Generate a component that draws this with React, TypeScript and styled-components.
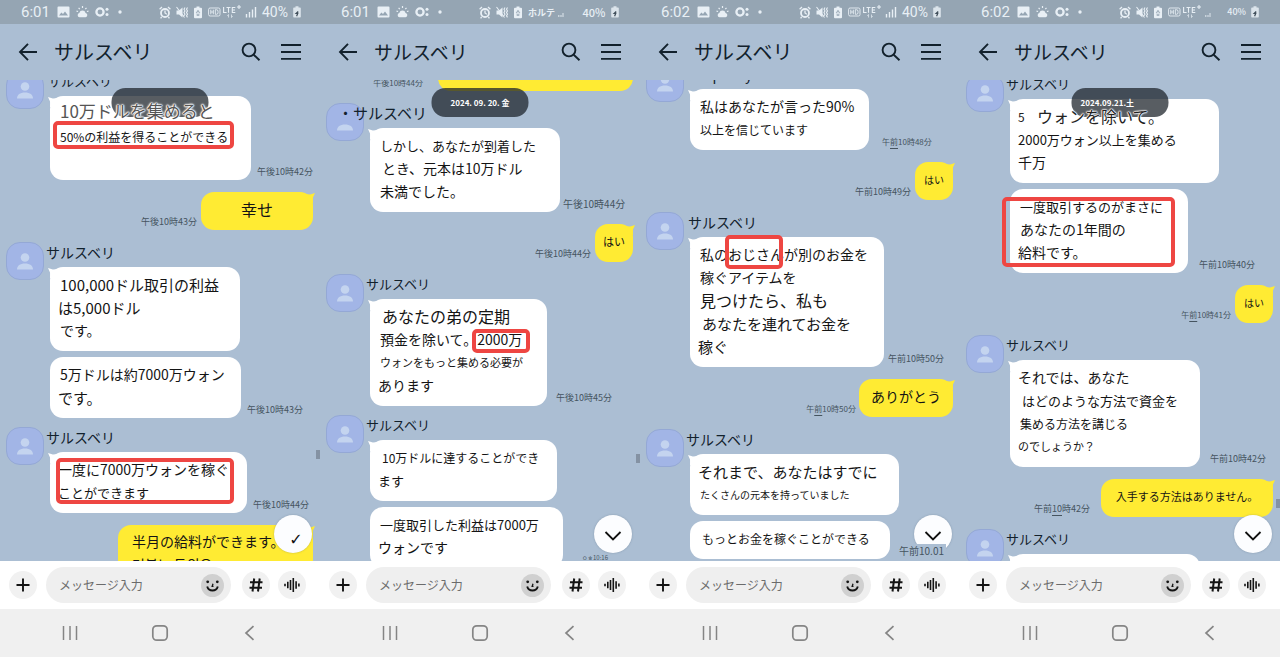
import React from "react";
import styled, { createGlobalStyle, css } from "styled-components";

const GlobalStyle = createGlobalStyle`
  *, *::before, *::after { box-sizing: border-box; }
  body { margin: 0; background: #abbed3; }
  body, button, input { font-family: "Noto Sans CJK JP", "Noto Sans CJK KR", sans-serif; }
  button { border: 0; padding: 0; background: none; color: inherit; cursor: pointer; }
`;

/* ---------- data ---------- */

type LineData = { text: string; size: number; indent?: number; lead?: string; halo?: "gray" | "dark" };
type MarkData = { left: number; top: number; width: number; height: number };
type BubbleData = { width: number; lines: LineData[]; mark?: MarkData; loose?: boolean };
type StampData = { text: string; size?: number; gap: number; under?: string };
type Item =
  | { kind: "in"; name: string; nameSize: number; nameShift?: number; headless?: boolean; bubbles: BubbleData[]; stamp?: StampData }
  | { kind: "out"; width: number; size: number; lines: string[]; stamp?: StampData };

type PhoneData = {
  clock: string;
  title: string;
  titleSize: number;
  network: "full" | "weak" | "label";
  percentSize: number;
  scroll: number;
  items: Item[];
  pill?: { text: string; size: number; align: "center" | "flex-start" };
  thumbTop?: number;
  jump: "check" | "chevron";
  corner?: { text: string; size: number; right: number };
};

const NAME = "サルスベリ";

const phones: PhoneData[] = [
  {
    clock: "6:01", title: NAME, titleSize: 20, network: "full", percentSize: 14, scroll: 9,
    pill: { text: "", size: 9, align: "center" },
    thumbTop: 370, jump: "check",
    items: [
      {
        kind: "in", name: NAME, nameSize: 13, nameShift: 2,
        bubbles: [{
          width: 201, loose: true,
          lines: [
            { text: "10万ドルを集めると", size: 17, indent: 2, halo: "gray" },
            { text: "50%の利益を得ることができる", size: 12, indent: 2 },
          ],
          mark: { left: 3, top: 25, width: 181, height: 28 },
        }],
        stamp: { text: "午後10時42分", gap: 6 },
      },
      { kind: "out", width: 112, size: 16, lines: ["幸せ"], stamp: { text: "午後10時43分", gap: 4 } },
      {
        kind: "in", name: NAME, nameSize: 14,
        bubbles: [
          {
            width: 190,
            lines: [
              { text: "100,000ドル取引の利益", size: 15, indent: 2 },
              { text: "は5,000ドル", size: 15 },
              { text: "です。", size: 14, indent: 2 },
            ],
          },
          {
            width: 191,
            lines: [
              { text: "5万ドルは約7000万ウォン", size: 14, indent: 2 },
              { text: "です。", size: 15 },
            ],
          },
        ],
        stamp: { text: "午後10時43分", gap: 6 },
      },
      {
        kind: "in", name: NAME, nameSize: 14,
        bubbles: [{
          width: 197,
          lines: [
            { text: "一度に7000万ウォンを稼ぐ", size: 14 },
            { text: "ことができます", size: 13 },
          ],
          mark: { left: 6, top: 6, width: 178, height: 46 },
        }],
        stamp: { text: "午後10時44分", gap: 6 },
      },
      { kind: "out", width: 195, size: 14, lines: ["半月の給料ができます。", "거북느 두의요"] },
    ],
  },
  {
    clock: "6:01", title: NAME, titleSize: 19, network: "label", percentSize: 11, scroll: 27,
    pill: { text: "2024. 09. 20. 金", size: 8, align: "center" },
    thumbTop: 374, jump: "chevron",
    corner: { text: "ㅇㅎ10:16", size: 6, right: 30 },
    items: [
      { kind: "out", width: 195, size: 14, lines: [""], stamp: { text: "午後10時44分", size: 8, gap: 15 } },
      {
        kind: "in", name: "・" + NAME, nameSize: 15, nameShift: -28, headless: true,
        bubbles: [{
          width: 190,
          lines: [
            { text: "しかし、あなたが到着した", size: 13, indent: 2 },
            { text: "とき、元本は10万ドル", size: 14, indent: 4 },
            { text: "未満でした。", size: 14, indent: 2 },
          ],
        }],
        stamp: { text: "午後10時44分", size: 10, gap: 3 },
      },
      { kind: "out", width: 38, size: 11, lines: ["はい"], stamp: { text: "午後10時44分", gap: 4 } },
      {
        kind: "in", name: NAME, nameSize: 13,
        bubbles: [{
          width: 177,
          lines: [
            { text: "あなたの弟の定期", size: 16, indent: 4 },
            { text: "預金を除いて。2000万", size: 14, indent: 2 },
            { text: "ウォンをもっと集める必要が", size: 11, indent: 2 },
            { text: "あります", size: 14 },
          ],
          mark: { left: 102, top: 30, width: 58, height: 24 },
        }],
        stamp: { text: "午後10時45分", gap: 9 },
      },
      {
        kind: "in", name: NAME, nameSize: 13,
        bubbles: [
          { width: 187, lines: [{ text: "10万ドルに達することができ", size: 12, indent: 4 }, { text: "ます", size: 13 }] },
          { width: 193, lines: [{ text: "一度取引した利益は7000万", size: 13, indent: 2 }, { text: "ウォンです", size: 14 }] },
        ],
      },
    ],
  },
  {
    clock: "6:02", title: NAME, titleSize: 20, network: "full", percentSize: 14, scroll: 16,
    jump: "chevron",
    corner: { text: "午前10.01", size: 10, right: 14 },
    items: [
      {
        kind: "in", name: "Grape myrtle", nameSize: 14, nameShift: 4,
        bubbles: [{
          width: 179,
          lines: [
            { text: "私はあなたが言った90%", size: 14, indent: 2 },
            { text: "以上を信じています", size: 12, indent: 2 },
          ],
        }],
        stamp: { text: "午10時48分", size: 8, gap: 13, under: "前" },
      },
      { kind: "out", width: 38, size: 10, lines: ["はい"], stamp: { text: "午前10時49分", gap: 4 } },
      {
        kind: "in", name: NAME, nameSize: 14, nameShift: 2,
        bubbles: [{
          width: 194,
          lines: [
            { text: "私のおじさんが別のお金を", size: 14, indent: 2 },
            { text: "稼ぐアイテムを", size: 14, indent: 2 },
            { text: "見つけたら、私も", size: 16, indent: 2 },
            { text: "あなたを連れてお金を", size: 15, indent: 4 },
            { text: "稼ぐ", size: 15 },
          ],
          mark: { left: 35, top: -2, width: 58, height: 34 },
        }],
        stamp: { text: "午前10時50分", gap: 4 },
      },
      { kind: "out", width: 94, size: 14, lines: ["ありがとう"], stamp: { text: "午10時50分", size: 8, gap: 3, under: "前" } },
      {
        kind: "in", name: NAME, nameSize: 14,
        bubbles: [
          {
            width: 209,
            lines: [
              { text: "それまで、あなたはすでに", size: 15 },
              { text: "たくさんの元本を持っていました", size: 10, indent: 2 },
            ],
          },
          { width: 200, lines: [{ text: "もっとお金を稼ぐことができる", size: 12, indent: 4 }] },
        ],
      },
    ],
  },
  {
    clock: "6:02", title: NAME, titleSize: 19, network: "weak", percentSize: 9, scroll: 6,
    pill: { text: "2024.09.21.土", size: 8, align: "flex-start" },
    thumbTop: 419, jump: "chevron",
    items: [
      {
        kind: "in", name: NAME, nameSize: 13,
        bubbles: [
          {
            width: 209,
            lines: [
              { lead: "5", text: "ウォンを除いて。", size: 16, halo: "dark" },
              { text: "2000万ウォン以上を集める", size: 13 },
              { text: "千万", size: 14 },
            ],
          },
          {
            width: 178,
            lines: [
              { text: "一度取引するのがまさに", size: 13, indent: 2 },
              { text: "あなたの1年間の", size: 14, indent: 2 },
              { text: "給料です。", size: 14 },
            ],
            mark: { left: -8, top: 8, width: 173, height: 70 },
          },
        ],
        stamp: { text: "午前10時40分", gap: 11 },
      },
      { kind: "out", width: 38, size: 10, lines: ["はい"], stamp: { text: "午10時41分", size: 8, gap: 4, under: "前" } },
      {
        kind: "in", name: NAME, nameSize: 13,
        bubbles: [{
          width: 190,
          lines: [
            { text: "それでは、あなた", size: 14 },
            { text: "はどのような方法で資金を", size: 13, indent: 4 },
            { text: "集める方法を講じる", size: 12, indent: 2 },
            { text: "のでしょうか？", size: 11 },
          ],
        }],
        stamp: { text: "午前10時42分", gap: 10 },
      },
      { kind: "out", width: 172, size: 11, lines: ["入手する方法はありません。"], stamp: { text: "午前時42分", gap: 11, under: "10" } },
      { kind: "in", name: NAME, nameSize: 13, bubbles: [{ width: 190, lines: [{ text: "", size: 14 }] }] },
    ],
  },
];

/* ---------- frame ---------- */

const Board = styled.main`
  display: grid;
  grid-template-columns: repeat(4, minmax(0, 1fr));
  height: 100vh;
`;

const Screen = styled.section`
  display: flex;
  flex-direction: column;
  min-height: 0;
  overflow: hidden;
  background: #abbed3;
  color: #12212c;
`;

const StatusBar = styled.div`
  display: flex;
  align-items: center;
  flex: none;
  height: 24px;
  padding: 0 21px;
  background: #95a5b3;
  color: #e8eff5;
  svg { display: block; flex: none; }
`;

const Clock = styled.time`
  width: 30px;
  font: 15px/24px Roboto, sans-serif;
`;

const StatusLeft = styled.div`
  display: flex;
  align-items: center;
  flex: 1;
  gap: 6px;
`;

const StatusRight = styled.div`
  display: flex;
  align-items: center;
  width: 140px;
  gap: 5px;
`;

const Network = styled.div`
  display: flex;
  align-items: center;
  width: 49px;
  gap: 3px;
  font-size: 9px;
  font-weight: 700;
  white-space: nowrap;
`;

const Percent = styled.span<{ $size: number }>`
  flex: 1;
  text-align: ${(p) => (p.$size === 9 ? "right" : "center")};
  white-space: nowrap;
  ${(p) =>
    p.$size > 12
      ? css`font: ${p.$size}px/24px Roboto, sans-serif;`
      : css`font-size: ${p.$size}px; font-weight: 500; line-height: 24px;`}
`;

const HeaderBar = styled.header`
  display: flex;
  align-items: center;
  flex: none;
  height: 56px;
  padding: 0 19px 0 18px;
  svg { display: block; }
`;

const Title = styled.h1<{ $size: number }>`
  flex: 1;
  margin: 0 0 0 16px;
  font-size: ${(p) => p.$size}px;
  font-weight: 400;
  line-height: 30px;
`;

const IconButton = styled.button`
  display: block;
  & + & { margin-left: 20px; }
`;

/* ---------- chat ---------- */

const Chat = styled.div`
  position: relative;
  flex: 1;
  min-height: 0;
  overflow: hidden;
`;

const InRow = styled.article`
  display: flex;
  margin-top: 12px;
  padding-left: 6px;
  & + & { margin-top: 9px; }
`;

const OutRow = styled.article`
  display: flex;
  justify-content: flex-end;
  align-items: flex-end;
  margin-top: 12px;
  padding-right: 7px;
`;

const Thread = styled.div<{ $scroll: number }>`
  margin-top: -${(p) => p.$scroll}px;
  > :first-child { margin-top: 0; }
`;

const AvatarBox = styled.div`
  flex: none;
  width: 38px;
  height: 38px;
  border: 1px solid #94a8d5;
  border-radius: 14px;
  background: #a2b5e6;
  svg { display: block; }
`;

const Column = styled.div`
  position: relative;
  margin-left: 2px;
`;

const Name = styled.div<{ $size: number; $shift: number }>`
  height: 25px;
  margin-left: ${(p) => p.$shift}px;
  font-size: ${(p) => p.$size}px;
  line-height: 20px;
  white-space: nowrap;
`;

const Stack = styled.div`
  display: flex;
  flex-direction: column;
  gap: 6px;
  padding-left: 4px;
`;

const StampedRow = styled.div`
  display: flex;
  align-items: flex-end;
`;

const bubbleBase = css`
  position: relative;
  flex: none;
  border-radius: 13px;
  color: #141414;
  white-space: nowrap;
  &::before {
    content: "";
    position: absolute;
    top: 1px;
    width: 12px;
    height: 10px;
    background: inherit;
  }
`;

const Bubble = styled.div<{ $width: number; $loose?: boolean; $tail: boolean }>`
  ${bubbleBase}
  width: ${(p) => p.$width}px;
  padding: ${(p) => (p.$loose ? "2px 8px 30px" : "6px 8px 9px")};
  background: #fff;
  &::before {
    display: ${(p) => (p.$tail ? "block" : "none")};
    left: -2px;
    clip-path: polygon(0 0, 40% 14%, 100% 10%, 40% 100%, 17% 100%, 17% 45%);
  }
  > p { line-height: ${(p) => (p.$loose ? 26 : 23)}px; }
`;

const OutBubble = styled.div<{ $width: number; $size: number; $multi: boolean }>`
  ${bubbleBase}
  width: ${(p) => p.$width}px;
  padding: ${(p) => (p.$multi ? "5px 0 10px 14px" : "6px 0 9px")};
  background: #ffeb33;
  font-size: ${(p) => p.$size}px;
  line-height: 23px;
  text-align: ${(p) => (p.$multi ? "left" : "center")};
  &::before {
    right: -2px;
    clip-path: polygon(100% 0, 60% 14%, 0 10%, 60% 100%, 83% 100%, 83% 45%);
  }
  > p { min-height: 23px; margin: 0; }
`;

const halos = {
  gray: css`
    color: #555;
    text-shadow: 0 0 1px #fff, 0 0 1px #fff, 0 0 1px #fff, 0 0 2px #fff, 0 0 2px #fff, 0 0 2px #fff, 0 0 3px #fff;
  `,
  dark: css`
    color: #222;
    text-shadow: 0 0 1px #fff, 0 0 1px #fff, 0 0 1px #fff, 0 0 2px #fff, 0 0 2px #fff, 0 0 2px #fff;
  `,
};

const Line = styled.p<{ $size: number; $indent: number; $halo?: "gray" | "dark" }>`
  position: relative;
  z-index: 2;
  display: flex;
  min-height: 23px;
  margin: 0;
  padding-left: ${(p) => p.$indent}px;
  font-size: ${(p) => p.$size}px;
  ${(p) => p.$halo && halos[p.$halo]}
`;

const Lead = styled.span`
  width: 19px;
  font-size: 12px;
`;

const Mark = styled.i<{ $box: MarkData }>`
  position: absolute;
  z-index: 3;
  left: ${(p) => p.$box.left}px;
  top: ${(p) => p.$box.top}px;
  width: ${(p) => p.$box.width}px;
  height: ${(p) => p.$box.height}px;
  border: 4px solid #ee4642;
  border-radius: 5px;
`;

const Stamp = styled.time<{ $size: number; $gap: number }>`
  margin: 0 ${(p) => p.$gap}px;
  color: #45545f;
  font-size: ${(p) => p.$size}px;
  line-height: 16px;
  white-space: nowrap;
  u { text-underline-offset: 3px; }
`;

const DatePill = styled.time<{ $size: number; $align: string }>`
  position: absolute;
  z-index: 1;
  top: 8px;
  left: 50%;
  display: flex;
  justify-content: ${(p) => p.$align};
  width: 97px;
  height: 29px;
  padding: 0 9px;
  border-radius: 14px;
  background: rgba(30, 37, 43, 0.74);
  color: #fff;
  font-size: ${(p) => p.$size}px;
  font-weight: 700;
  line-height: 29px;
  white-space: nowrap;
  transform: translateX(-50%);
`;

const Thumb = styled.div<{ $top: number }>`
  position: absolute;
  top: ${(p) => p.$top}px;
  right: 0;
  width: 4px;
  height: 9px;
  background: #8492a3;
`;

const JumpButton = styled.button`
  position: absolute;
  z-index: 4;
  right: 8px;
  bottom: 8px;
  display: grid;
  place-items: center;
  width: 38px;
  height: 38px;
  border-radius: 50%;
  background: #fcfdff;
  box-shadow: 0 0 2px rgba(60, 80, 100, 0.35);
  color: #111;
`;

const CheckGlyph = styled.span`
  padding: 12px 0 0 6px;
  font: 16px/20px "DejaVu Sans", sans-serif;
`;

const CornerStamp = styled.time<{ $size: number; $right: number }>`
  position: absolute;
  z-index: 5;
  right: ${(p) => p.$right}px;
  bottom: 0;
  padding: 0 2px;
  background: #abbed3;
  color: #45545f;
  font-size: ${(p) => p.$size}px;
  line-height: ${(p) => (p.$size > 8 ? "14px" : "7px")};
  border-bottom: ${(p) => (p.$size > 8 ? "3px solid #abbed3" : "0")};
`;

/* ---------- bottom bars ---------- */

const Composer = styled.form`
  display: flex;
  align-items: center;
  flex: none;
  height: 48px;
  padding: 0 14px 0 9px;
  background: #fff;
  color: #141414;
  svg { display: block; }
`;

const RoundButton = styled.button`
  display: grid;
  place-items: center;
  flex: none;
  width: 28px;
  height: 28px;
  border-radius: 50%;
  background: #f1f1f1;
  & + & { margin-left: 8px; }
`;

const Field = styled.div`
  display: flex;
  align-items: center;
  flex: 1;
  min-width: 0;
  height: 36px;
  margin: 0 11px 0 9px;
  padding: 0 7px 0 13px;
  border-radius: 18px;
  background: #efefef;
`;

const TextBox = styled.input`
  flex: 1;
  min-width: 0;
  border: 0;
  padding: 0;
  outline: 0;
  background: transparent;
  font-size: 12px;
  line-height: 20px;
  &::placeholder { color: #6b6b6b; opacity: 1; }
`;

const EmojiButton = styled.button`
  display: grid;
  place-items: center;
  flex: none;
  width: 23px;
  height: 23px;
  border-radius: 50%;
  background: #d0d0d0;
`;

const NavBar = styled.nav`
  display: grid;
  grid-template-columns: repeat(3, 1fr);
  flex: none;
  height: 48px;
  padding: 0 25px;
  background: #f0f0f0;
  color: #858585;
`;

const NavButton = styled.button`
  display: grid;
  place-items: center;
`;

/* ---------- icons ---------- */

const StatusIcons = () => (
  <>
    <svg width="13" height="12" viewBox="0 0 13 12"><path fill="currentColor" fillRule="evenodd" d="M1.5.5h10a1 1 0 0 1 1 1v9a1 1 0 0 1-1 1h-10a1 1 0 0 1-1-1v-9a1 1 0 0 1 1-1ZM2 9.600h9L8 5.500 6 8 4.400 6.600Z" /></svg>
    <svg width="13" height="12" viewBox="0 0 13 12" fill="currentColor"><path d="M3.500 11.200a2.200 2.200 0 0 1-.2-4.300 3.300 3.300 0 0 1 6.300 0 2.200 2.200 0 0 1 0 4.300Z" /><path d="M6.500 0v2M2.600 1.800l1.200 1.300M10.500 1.800 9.300 3.100M.5 5.200l1.600.3M12.500 5.200l-1.600.3" stroke="currentColor" strokeWidth="1.200" /></svg>
    <svg width="14" height="12" viewBox="0 0 14 12"><circle cx="5" cy="6" r="3.600" fill="none" stroke="currentColor" strokeWidth="2.300" /><circle cx="12" cy="3.300" r="1.500" fill="currentColor" /><circle cx="12" cy="8.500" r="1.500" fill="currentColor" /></svg>
    <svg width="10" height="12" viewBox="0 0 10 12"><circle cx="5" cy="6" r="1.700" fill="currentColor" /></svg>
  </>
);

const DeviceIcons = () => (
  <>
    <svg width="12" height="13" viewBox="0 0 12 13" fill="none" stroke="currentColor"><circle cx="6" cy="7" r="4" strokeWidth="1.800" /><path d="M6 4.500V7l1.800 1.200M.6 3.200 3 1M11.400 3.200 9 1M2.600 11l-1 1.300M9.400 11l1 1.300" strokeWidth="1.300" /></svg>
    <svg width="12" height="13" viewBox="0 0 12 13"><path fill="currentColor" d="M.5 4.500H3L6.500 1.500v10L3 8.500H.5Z" /><path d="m.5 1 8 10.500M9 1.500l-1 1.700 1 1.700-1 1.600 1 1.700-1 1.600M11.500 1.500l-1 1.700 1 1.700-1 1.600 1 1.700-1 1.600 1 1.600" fill="none" stroke="currentColor" strokeWidth="1.100" /></svg>
    <svg width="10" height="13" viewBox="0 0 10 13"><path fill="currentColor" fillRule="evenodd" d="M3.500.5h3v1.200H8a1 1 0 0 1 1 1v8.500a1 1 0 0 1-1 1H2a1 1 0 0 1-1-1V2.700a1 1 0 0 1 1-1h1.500ZM5 3.800 2.700 7h1v2.800h2.600V7h1Z" /><path d="M5 5.600v3M3.600 7.100h2.800" stroke="currentColor" strokeWidth="1" /></svg>
  </>
);

const HdLte = () => (
  <svg width="34" height="16" viewBox="0 0 34 16" fill="none" stroke="currentColor">
    <rect x=".6" y="4" width="11.400" height="8" rx="1.500" strokeWidth=".9" />
    <path d="M2.800 5.700v4.600M5.300 5.700v4.600M2.800 8h2.500M7.300 5.700v4.600h1a1.600 1.600 0 0 0 1.700-1.600V7.300a1.600 1.600 0 0 0-1.700-1.600Z" strokeWidth=".9" />
    <path d="M15.600 3v5.500h3M18.500 3.500h4M20.500 3.500v5.300M27.300 3.500h-3v5h3M24.300 6h2.700M31 1v4M29 3h4" strokeWidth="1.100" />
    <path d="M20.500 10.500v3M19.300 11.800l1.200-1.300M23.500 10.500v3M24.700 12.200l-1.200 1.300" strokeWidth=".7" />
  </svg>
);

const Signal = ({ weak }: { weak?: boolean }) =>
  weak ? (
    <svg width="12" height="12" viewBox="0 0 12 12" stroke="currentColor" fill="none"><path d="M.8 9v2M3 9v2M5 7v4" strokeWidth=".9" /></svg>
  ) : (
    <svg width="12" height="12" viewBox="0 0 12 12" stroke="currentColor" fill="none"><path d="M1.500 8v3.500M4.500 6v5.500M7.500 3.500v8M10.500 1v10.500" strokeWidth="1.400" /></svg>
  );

const Charging = () => (
  <svg width="8" height="12" viewBox="0 0 8 12"><path fill="currentColor" d="M2.500.3h3v1.200H7a.8.8 0 0 1 .8.8v8.500a.8.8 0 0 1-.8.8H1a.8.8 0 0 1-.8-.8V2.300a.8.8 0 0 1 .8-.8h1.500Z" opacity=".85" /><path d="M5.200 5.500 3.200 7.300h1.600L3.600 10.200" fill="none" stroke="#3f4d59" strokeWidth="1.200" /></svg>
);

const Person = ({ headless }: { headless?: boolean }) => (
  <svg width="36" height="36" viewBox="0 0 36 36" fill="#c4d4ef">
    {!headless && <circle cx="18" cy="14.500" r="4.300" />}
    <path d="M10 26.500c0-3.800 3-6 8-6s8 2.200 8 6Z" />
  </svg>
);

/* ---------- parts ---------- */

const StampText = ({ stamp }: { stamp: StampData }) => {
  const cut = stamp.under === "10" ? 2 : 1;
  return (
    <Stamp $size={stamp.size ?? 9} $gap={stamp.gap}>
      {stamp.under ? (
        <>
          {stamp.text.slice(0, cut)}
          <u>{stamp.under}</u>
          {stamp.text.slice(cut)}
        </>
      ) : (
        stamp.text
      )}
    </Stamp>
  );
};

const Message = ({ item }: { item: Item }) => {
  if (item.kind === "out") {
    return (
      <OutRow>
        {item.stamp && <StampText stamp={item.stamp} />}
        <OutBubble $width={item.width} $size={item.size} $multi={item.lines.length > 1}>
          {item.lines.map((text, i) => <p key={i}>{text}</p>)}
        </OutBubble>
      </OutRow>
    );
  }
  return (
    <InRow>
      <AvatarBox><Person headless={item.headless} /></AvatarBox>
      <Column>
        <Name $size={item.nameSize} $shift={item.nameShift ?? 0}>{item.name}</Name>
        <Stack>
          {item.bubbles.map((bubble, i) => (
            <StampedRow key={i}>
              <Bubble $width={bubble.width} $loose={bubble.loose} $tail={i === 0}>
                {bubble.lines.map((line, j) => (
                  <Line key={j} $size={line.size} $indent={line.indent ?? 0} $halo={line.halo}>
                    {line.lead && <Lead>{line.lead}</Lead>}
                    {line.text}
                  </Line>
                ))}
                {bubble.mark && <Mark $box={bubble.mark} />}
              </Bubble>
              {item.stamp && i === item.bubbles.length - 1 && <StampText stamp={item.stamp} />}
            </StampedRow>
          ))}
        </Stack>
      </Column>
    </InRow>
  );
};

const Phone = ({ data }: { data: PhoneData }) => (
  <Screen>
    <StatusBar>
      <StatusLeft>
        <Clock>{data.clock}</Clock>
        <StatusIcons />
      </StatusLeft>
      <StatusRight>
        <DeviceIcons />
        <Network>
          {data.network === "label" ? <>ホルテ<Signal weak /></> : <><HdLte /><Signal weak={data.network === "weak"} /></>}
        </Network>
        <Percent $size={data.percentSize}>40%</Percent>
        <Charging />
      </StatusRight>
    </StatusBar>

    <HeaderBar>
      <IconButton type="button" aria-label="戻る">
        <svg width="20" height="20" viewBox="0 0 20 20" fill="none" stroke="currentColor" strokeWidth="1.900"><path d="M19 10H2.500M10 1.800 2 10l8 8.200" /></svg>
      </IconButton>
      <Title $size={data.titleSize}>{data.title}</Title>
      <IconButton type="button" aria-label="検索">
        <svg width="20" height="20" viewBox="0 0 20 20" fill="none" stroke="currentColor" strokeWidth="1.900"><circle cx="8" cy="8" r="6.400" /><path d="m12.700 12.700 5.800 5.500" /></svg>
      </IconButton>
      <IconButton type="button" aria-label="メニュー">
        <svg width="20" height="20" viewBox="0 0 20 20" stroke="currentColor" strokeWidth="1.800"><path d="M0 3h20M0 10h20M0 16.800h20" /></svg>
      </IconButton>
    </HeaderBar>

    <Chat>
      <Thread $scroll={data.scroll}>
        {data.items.map((item, i) => <Message key={i} item={item} />)}
      </Thread>
      {data.pill && <DatePill $size={data.pill.size} $align={data.pill.align}>{data.pill.text}</DatePill>}
      {data.thumbTop !== undefined && <Thumb $top={data.thumbTop} />}
      <JumpButton type="button" aria-label="最新のメッセージへ">
        {data.jump === "check" ? (
          <CheckGlyph>✓</CheckGlyph>
        ) : (
          <svg width="18" height="18" viewBox="0 0 18 18" fill="none" stroke="currentColor" strokeWidth="1.800"><path d="m1.500 7 7.500 7.500L16.500 7" /></svg>
        )}
      </JumpButton>
      {data.corner && <CornerStamp $size={data.corner.size} $right={data.corner.right}>{data.corner.text}</CornerStamp>}
    </Chat>

    <Composer onSubmit={(e) => e.preventDefault()}>
      <RoundButton type="button" aria-label="追加">
        <svg width="14" height="14" viewBox="0 0 14 14" stroke="currentColor" strokeWidth="1.900"><path d="M7 .5v13M.5 7h13" /></svg>
      </RoundButton>
      <Field>
        <TextBox aria-label="メッセージ入力" placeholder="メッセージ入力" />
        <EmojiButton type="button" aria-label="スタンプ">
          <svg width="15" height="15" viewBox="0 0 15 15" fill="none" stroke="currentColor"><path d="M2.200 8.500a5.500 5.500 0 0 0 10.600 0" strokeWidth="1.900" /><path d="M8 5.800 7.200 8.300h1.300" strokeWidth="1.300" /><circle cx="2.700" cy="3.800" r="1.400" fill="currentColor" stroke="none" /><circle cx="12.300" cy="3.800" r="1.400" fill="currentColor" stroke="none" /></svg>
        </EmojiButton>
      </Field>
      <RoundButton type="button" aria-label="ハッシュ">
        <svg width="14" height="14" viewBox="0 0 14 14" fill="none" stroke="currentColor" strokeWidth="2"><path d="M5.200.5 3.500 13.500M10.700.5 9 13.500M1 4.300h12.500M.5 9.800H13" /></svg>
      </RoundButton>
      <RoundButton type="button" aria-label="音声">
        <svg width="16" height="16" viewBox="0 0 16 16" stroke="currentColor" strokeWidth="1.600"><path d="M1 6.800v2.400M3.800 4.800v6.400M6.500 3v10M9.300 1v14M12.100 4.300v7.400M14.900 6.500v3" /></svg>
      </RoundButton>
    </Composer>

    <NavBar>
      <NavButton type="button" aria-label="履歴">
        <svg width="16" height="16" viewBox="0 0 16 16" stroke="currentColor" strokeWidth="1.500"><path d="M1.500 1v14M8 1v14M14.500 1v14" /></svg>
      </NavButton>
      <NavButton type="button" aria-label="ホーム">
        <svg width="18" height="18" viewBox="0 0 18 18" fill="none" stroke="currentColor" strokeWidth="1.700"><rect x="1.800" y="1.800" width="14.400" height="14.400" rx="4" /></svg>
      </NavButton>
      <NavButton type="button" aria-label="戻る">
        <svg width="16" height="16" viewBox="0 0 16 16" fill="none" stroke="currentColor" strokeWidth="1.700"><path d="M11.500 1.200 4 8l7.500 6.800" /></svg>
      </NavButton>
    </NavBar>
  </Screen>
);

export default function App() {
  return (
    <>
      <GlobalStyle />
      <Board>
        {phones.map((phone, i) => <Phone key={i} data={phone} />)}
      </Board>
    </>
  );
}
